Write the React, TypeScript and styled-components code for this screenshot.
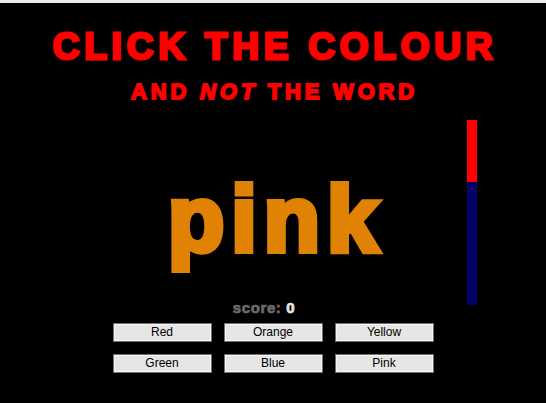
import React from "react";
import styled, { createGlobalStyle } from "styled-components";

const GlobalStyle = createGlobalStyle`
  html, body {
    margin: 0;
    padding: 0;
    background: #000;
  }
  body {
    font-family: "Liberation Sans", Arial, sans-serif;
  }
`;

const Page = styled.main`
  width: 546px;
  height: 400px;
  border-top: 3px solid #ededed;
  background: #000;
  display: flex;
  flex-direction: column;
  align-items: center;
  overflow: hidden;
`;

const Title = styled.h1`
  margin: 23px 0 0;
  padding-left: 4px;
  font-family: "Liberation Sans", Arial, sans-serif;
  font-weight: 700;
  font-size: 37px;
  line-height: 42px;
  letter-spacing: 4.8px;
  color: #ff0000;
  -webkit-text-stroke: 2.8px #ff0000;
  white-space: nowrap;
`;

const Subtitle = styled.h2`
  margin: 11px 0 0;
  padding-left: 3px;
  font-family: "Liberation Sans", Arial, sans-serif;
  font-weight: 700;
  font-size: 22px;
  line-height: 26px;
  letter-spacing: 3.8px;
  color: #ff0000;
  -webkit-text-stroke: 1.8px #ff0000;
  white-space: nowrap;

  em {
    font-style: italic;
  }
`;

const Stage = styled.section`
  width: 100%;
  margin-top: 15px;
  display: grid;
  grid-template-columns: 1fr 388px 1fr;
  height: 185px;
`;

const Word = styled.div<{ $ink: string }>`
  grid-column: 2;
  align-self: start;
  justify-self: center;
  margin-top: 51px;
  padding-left: 7px;
  font-family: "Liberation Sans", Arial, sans-serif;
  font-weight: 700;
  font-size: 92px;
  line-height: 96px;
  letter-spacing: 7px;
  color: ${(p) => p.$ink};
  -webkit-text-stroke: 6px ${(p) => p.$ink};
`;

const Timer = styled.div`
  grid-column: 3;
  justify-self: start;
  width: 10px;
  height: 185px;
  background: #000066;
  display: flex;
  flex-direction: column;
`;

const TimerUsed = styled.div`
  background: #ff0000;
  flex: none;
`;

const Score = styled.div`
  margin-top: -5px;
  padding-right: 18px;
  font-family: "Liberation Sans", Arial, sans-serif;
  font-weight: 700;
  font-size: 15px;
  line-height: 16px;
  letter-spacing: 0.6px;
  color: #6a6a6a;
  -webkit-text-stroke: 0.7px #6a6a6a;

  b {
    color: #e6e6e6;
    -webkit-text-stroke: 0.7px #e6e6e6;
  }
`;

const Choices = styled.div`
  margin-top: 7px;
  display: grid;
  grid-template-columns: repeat(3, 99px);
  column-gap: 12px;
  row-gap: 12px;
`;

const Choice = styled.button`
  height: 19px;
  padding: 0;
  border: 1px solid #707070;
  box-shadow: inset 0 0 0 1px #f7f7f7;
  background: #e6e6e6;
  color: #000;
  font-family: "Liberation Sans", Arial, sans-serif;
  font-size: 12px;
  line-height: 17px;
  cursor: pointer;
`;

const colours = ["Red", "Orange", "Yellow", "Green", "Blue", "Pink"];

export default function App() {
  const elapsed = 62 / 185;
  return (
    <>
      <GlobalStyle />
      <Page>
        <Title>CLICK THE COLOUR</Title>
        <Subtitle>
          AND <em>NOT</em> THE WORD
        </Subtitle>
        <Stage>
          <Word $ink="#e08204">pink</Word>
          <Timer>
            <TimerUsed style={{ height: `${elapsed * 100}%` }} />
          </Timer>
        </Stage>
        <Score>
          score: <b>0</b>
        </Score>
        <Choices>
          {colours.map((c) => (
            <Choice key={c}>{c}</Choice>
          ))}
        </Choices>
      </Page>
    </>
  );
}
